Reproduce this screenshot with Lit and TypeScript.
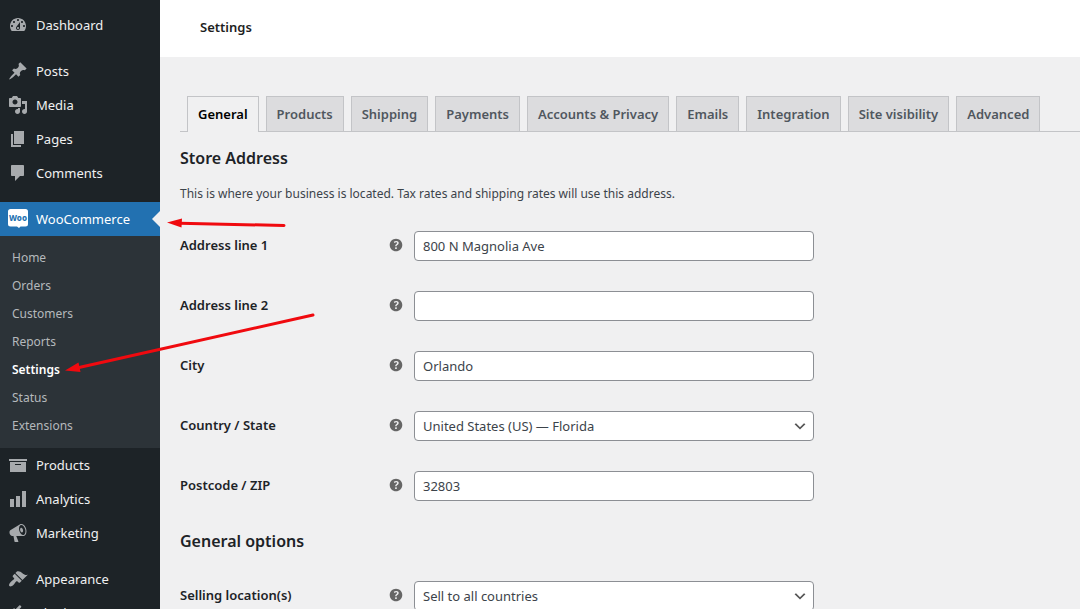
import { LitElement, html, css } from "lit";
import { customElement } from "lit/decorators.js";
import { classMap } from "lit/directives/class-map.js";

const ICONS: Record<string, string> = {
  dashboard:
    "M3.76 16h12.48c1.1-1.37 1.76-3.11 1.76-5 0-4.42-3.58-8-8-8s-8 3.58-8 8c0 1.89.66 3.63 1.76 5zM10 4c.55 0 1 .45 1 1s-.45 1-1 1-1-.45-1-1 .45-1 1-1zM6 6c.55 0 1 .45 1 1s-.45 1-1 1-1-.45-1-1 .45-1 1-1zm8 0c.55 0 1 .45 1 1s-.45 1-1 1-1-.45-1-1 .45-1 1-1zm-5.37 5.55L12 7v6c0 1.1-.9 2-2 2s-2-.9-2-2c0-.57.24-1.08.63-1.45zM4 10c.55 0 1 .45 1 1s-.45 1-1 1-1-.45-1-1 .45-1 1-1zm12 0c.55 0 1 .45 1 1s-.45 1-1 1-1-.45-1-1 .45-1 1-1zm-5 3c0-.55-.45-1-1-1s-1 .45-1 1 .45 1 1 1 1-.45 1-1z",
  pin: "M10.44 3.02l1.82-1.82 6.36 6.35-1.83 1.82c-1.05-.68-2.48-.57-3.41.36l-.75.75c-.92.93-1.04 2.35-.35 3.41l-1.83 1.82-2.41-2.41-2.8 2.79c-.42.42-3.38 2.71-3.8 2.29s1.86-3.39 2.28-3.81l2.79-2.79L4.1 9.36l1.83-1.82c1.05.69 2.48.57 3.4-.36l.75-.75c.93-.92 1.05-2.35.36-3.41z",
  media:
    "M13 11V4c0-.55-.45-1-1-1h-1.67L9 1H5L3.67 3H2c-.55 0-1 .45-1 1v7c0 .55.45 1 1 1h10c.55 0 1-.45 1-1zM7 4.5c1.38 0 2.5 1.12 2.5 2.5S8.38 9.5 7 9.5 4.5 8.38 4.5 7 5.62 4.5 7 4.5zM14 6h5v10.5c0 1.38-1.12 2.5-2.5 2.5S14 17.88 14 16.5s1.12-2.5 2.5-2.5c.17 0 .34.02.5.05V9h-3V6zm-4 8.05V13h2v3.5c0 1.38-1.12 2.5-2.5 2.5S7 17.88 7 16.5 8.12 14 9.5 14c.17 0 .34.02.5.05z",
  page: "M6 15V2h10v13H6zm-1 1h8v2H3V5h2v11z",
  comment: "M4 2h11c.55 0 1 .45 1 1v9c0 .55-.45 1-1 1h-3l-5 5v-5H4c-.55 0-1-.45-1-1V3c0-.55.45-1 1-1z",
  archive: "M19 4v2H1V4h18zM2 7h16v10H2V7zm11 3V9H7v1h6z",
  chart: "M18 18V2h-4v16h4zm-6 0V7H8v11h4zm-6 0v-8H2v8h4z",
  megaphone:
    "M18.15 5.94c.46 1.62.38 3.22-.02 4.48-.42 1.28-1.26 2.18-2.3 2.48-.16.06-.26.06-.4.06-.06.02-.12.02-.18.02-.06.02-.14.02-.22.02h-6.8l2.22 5.5c.02.14-.06.26-.14.34-.08.1-.24.16-.34.16H6.95c-.1 0-.26-.06-.34-.16-.08-.08-.16-.2-.14-.34l-1-5.5H4.25l-.02-.02c-.5.06-1.08-.18-1.54-.62s-.88-1.08-1.06-1.88c-.24-.8-.2-1.56-.02-2.2.18-.62.58-1.08 1.06-1.3l.02-.02 9-5.4c.1-.06.18-.1.24-.16.06-.04.14-.08.24-.12.16-.08.28-.12.5-.18 1.04-.3 2.24.1 3.22.98s1.84 2.24 2.26 3.86zm-2.58 5.98h-.02c.4-.1.74-.34 1.04-.7.58-.7.86-1.76.86-3.04 0-.64-.1-1.3-.28-1.98-.34-1.36-1.02-2.5-1.78-3.24s-1.68-1.1-2.46-.88c-.82.22-1.4.96-1.7 2-.32 1.04-.28 2.36.06 3.72.38 1.36 1 2.5 1.8 3.24.78.74 1.62 1.1 2.48.88zm-2.54-7.08c.22-.04.42-.02.62.04.38.16.76.48 1.02 1s.42 1.2.42 1.78c0 .3-.04.56-.12.8-.18.48-.44.84-.86.94-.34.1-.8-.06-1.14-.4s-.64-.86-.78-1.5c-.18-.62-.12-1.24.02-1.72s.48-.84.82-.94z",
  brush:
    "M14.48 11.06L7.41 3.99l1.5-1.5c.5-.56 2.3-.47 3.51.32 1.21.8 1.43 1.28 2.91 2.1 1.18.64 2.45 1.26 4.45.85zm-.71.71L6.7 4.7 4.93 6.47c-.39.39-.39 1.02 0 1.41l1.06 1.06c.39.39.39 1.03 0 1.42-.6.6-1.43 1.11-2.21 1.69-.35.26-.7.53-1.01.84C1.43 14.23.4 16.08 1.4 17.07c.99 1 2.84-.03 4.18-1.36.31-.31.58-.66.85-1.02.57-.78 1.08-1.61 1.69-2.21.39-.39 1.02-.39 1.41 0l1.06 1.06c.39.39 1.02.39 1.41 0z",
  plug: "M13.11 4.36L9.87 7.6 8 5.73l3.24-3.24c.35-.34 1.05-.2 1.56.32.52.51.66 1.21.31 1.55zm-8 1.77l.91-1.12 9.01 9.01-1.19.84c-.71.71-2.63 1.16-3.82 1.16H6.14L4.9 17.26c-.59.59-1.54.59-2.12 0-.59-.58-.59-1.53 0-2.12l1.24-1.24v-3.88c0-1.13.4-3.19 1.09-3.89zm7.26 3.97l3.24-3.24c.34-.35 1.04-.21 1.55.31.52.51.66 1.21.31 1.55l-3.24 3.25z",
  help: "M17 10c0-3.87-3.14-7-7-7-3.87 0-7 3.13-7 7s3.13 7 7 7c3.86 0 7-3.13 7-7zm-6.3 1.48H9.14v-.43c0-.38.08-.7.24-.98s.46-.57.88-.89c.41-.29.68-.53.81-.71.14-.18.2-.39.2-.62 0-.25-.09-.44-.28-.58-.19-.13-.45-.19-.79-.19-.58 0-1.25.19-2 .57l-.64-1.28c.87-.49 1.8-.74 2.77-.74.81 0 1.45.2 1.92.58.48.39.71.91.71 1.55 0 .43-.09.8-.29 1.11-.19.32-.57.67-1.11 1.06-.38.28-.61.49-.71.63-.1.15-.15.34-.15.57v.35zm-1.47 2.74c-.18-.17-.27-.42-.27-.73 0-.33.08-.58.26-.75s.43-.25.77-.25c.32 0 .57.09.75.26s.27.42.27.74c0 .3-.09.55-.27.72-.18.18-.43.27-.75.27-.33 0-.58-.09-.76-.26z",
};

const icon = (name: string) =>
  html`<svg class="icon" viewBox="0 0 20 20" aria-hidden="true"><path d=${ICONS[name]}></path></svg>`;

const wooIcon = html`<svg class="icon woo" viewBox="0 0 20 20" aria-hidden="true">
  <path d="M2.500 0h15A2.500 2.500 0 0 1 20 2.500v12.500a2.500 2.500 0 0 1-2.500 2.500H12.500L11 19l-2-1.500H2.500A2.500 2.500 0 0 1 0 15V2.500A2.500 2.500 0 0 1 2.500 0z"></path>
  <text class="woo-text" x="10" y="12" text-anchor="middle">Woo</text>
</svg>`;

interface MenuItem {
  label: string;
  icon: string;
  children?: string[];
}

// Each inner list is a group; groups are divided by a blank separator.
const MENU: MenuItem[][] = [
  [{ label: "Dashboard", icon: "dashboard" }],
  [
    { label: "Posts", icon: "pin" },
    { label: "Media", icon: "media" },
    { label: "Pages", icon: "page" },
    { label: "Comments", icon: "comment" },
  ],
  [
    {
      label: "WooCommerce",
      icon: "woo",
      children: ["Home", "Orders", "Customers", "Reports", "Settings", "Status", "Extensions"],
    },
    { label: "Products", icon: "archive" },
    { label: "Analytics", icon: "chart" },
    { label: "Marketing", icon: "megaphone" },
  ],
  [
    { label: "Appearance", icon: "brush" },
    { label: "Plugins", icon: "plug" },
  ],
];

const TABS = [
  "General",
  "Products",
  "Shipping",
  "Payments",
  "Accounts & Privacy",
  "Emails",
  "Integration",
  "Site visibility",
  "Advanced",
];

interface Field {
  id: string;
  label: string;
  value: string;
  select?: boolean;
}

const ADDRESS: Field[] = [
  { id: "address1", label: "Address line 1", value: "800 N Magnolia Ave" },
  { id: "address2", label: "Address line 2", value: "" },
  { id: "city", label: "City", value: "Orlando" },
  { id: "country", label: "Country / State", value: "United States (US) — Florida", select: true },
  { id: "postcode", label: "Postcode / ZIP", value: "32803" },
];

const GENERAL: Field[] = [
  { id: "selling", label: "Selling location(s)", value: "Sell to all countries", select: true },
];

@customElement("admin-menu")
class AdminMenu extends LitElement {
  static styles = css`
    :host {
      display: block;
      background: #1d2327;
      padding-top: 8px;
      font-size: 13px;
      line-height: 18px;
    }
    .list {
      list-style: none;
      margin: 0;
      padding: 0;
    }
    .group {
      margin-bottom: 12px;
    }
    .item {
      display: flex;
      align-items: center;
      gap: 8px;
      height: 34px;
      padding-left: 8px;
      color: #f0f0f1;
      text-decoration: none;
    }
    .item.current {
      position: relative;
      background: #2271b1;
      color: #fff;
    }
    .item.current::after {
      content: "";
      position: absolute;
      right: 0;
      top: 9px;
      border: 8px solid transparent;
      border-left-width: 0;
      border-right-color: #f0f0f1;
    }
    .icon {
      width: 20px;
      height: 20px;
      flex: none;
      fill: #a7aaad;
    }
    .icon.woo {
      fill: #fff;
    }
    .woo-text {
      fill: #2271b1;
      font-size: 8px;
      font-weight: 800;
    }
    .sub {
      list-style: none;
      margin: 0;
      padding: 8px 0;
      background: #2c3338;
    }
    .sub-link {
      display: block;
      padding: 5px 12px;
      font-size: 12px;
      color: #b5b9bc;
      text-decoration: none;
    }
    .sub-link.current {
      color: #fff;
      font-weight: 600;
    }
  `;

  render() {
    return html`<nav aria-label="Main menu">
      ${MENU.map(
        (group) => html`<ul class="list group">
          ${group.map(
            (item) => html`<li>
              <a href="#" class=${classMap({ item: true, current: !!item.children })}>
                ${item.icon === "woo" ? wooIcon : icon(item.icon)}<span>${item.label}</span>
              </a>
              ${item.children
                ? html`<ul class="sub">
                    ${item.children.map(
                      (c) => html`<li>
                        <a href="#" class=${classMap({ "sub-link": true, current: c === "Settings" })}>${c}</a>
                      </li>`
                    )}
                  </ul>`
                : ""}
            </li>`
          )}
        </ul>`
      )}
    </nav>`;
  }
}

@customElement("settings-form")
class SettingsForm extends LitElement {
  static styles = css`
    :host {
      display: block;
      padding: 39px 0 0 20px;
    }
    .tabs {
      display: flex;
      gap: 7px;
      padding-left: 7px;
      border-bottom: 1px solid #c3c4c7;
    }
    .tab {
      padding: 5px 10px;
      border: 1px solid #c3c4c7;
      border-bottom: 0;
      background: #dcdcde;
      color: #50575e;
      font-size: 13px;
      font-weight: 600;
      line-height: 24px;
      white-space: nowrap;
      text-decoration: none;
    }
    .tab.current {
      margin-bottom: -1px;
      padding-bottom: 6px;
      background: #f0f0f1;
      color: #000;
    }
    .heading {
      margin: 0;
      padding: 14px 0;
      font-size: 16px;
      font-weight: 600;
      line-height: 24px;
      color: #1d2327;
    }
    .intro {
      margin: 0;
      padding-top: 1px;
      font-size: 12px;
      line-height: 18px;
    }
    .rows {
      display: flex;
      flex-direction: column;
      gap: 30px;
      padding: 28px 0 14px;
    }
    .heading + .rows {
      padding-top: 14px;
    }
    .row {
      display: grid;
      grid-template-columns: 234px minmax(0, 400px);
      align-items: center;
    }
    .head {
      display: flex;
      align-items: center;
      justify-content: space-between;
      padding: 0 9px 2px 0;
    }
    .label {
      font-size: 13px;
      font-weight: 600;
      line-height: 18px;
      color: #1d2327;
    }
    .icon {
      width: 18px;
      height: 18px;
      fill: #666;
    }
    .control {
      box-sizing: border-box;
      width: 100%;
      height: 30px;
      margin: 0;
      padding: 0 8px;
      border: 1px solid #8c8f94;
      border-radius: 4px;
      background: #fff;
      color: #3c434a;
      font-family: inherit;
      font-size: 13px;
      line-height: 28px;
    }
    .picker {
      display: grid;
      align-items: center;
    }
    .picker > * {
      grid-area: 1 / 1;
    }
    .picker .control {
      appearance: none;
      padding-right: 24px;
    }
    .chevron {
      justify-self: end;
      width: 16px;
      height: 16px;
      margin-right: 6px;
      fill: #555;
      pointer-events: none;
    }
  `;

  private row(f: Field) {
    return html`<div class="row">
      <div class="head"><label class="label" for=${f.id}>${f.label}</label>${icon("help")}</div>
      ${f.select
        ? html`<div class="picker">
            <select class="control" id=${f.id}>
              <option>${f.value}</option>
            </select>
            <svg class="chevron" viewBox="0 0 20 20" aria-hidden="true">
              <path d="M5 6.500l5 5 5-5 1.800 1.200-6.800 6.800-6.800-6.800z"></path>
            </svg>
          </div>`
        : html`<input class="control" type="text" id=${f.id} .value=${f.value} />`}
    </div>`;
  }

  render() {
    return html`<nav class="tabs" aria-label="Settings sections">
        ${TABS.map((t, i) => html`<a href="#" class=${classMap({ tab: true, current: i === 0 })}>${t}</a>`)}
      </nav>
      <form>
        <h2 class="heading">Store Address</h2>
        <p class="intro">
          This is where your business is located. Tax rates and shipping rates will use this address.
        </p>
        <div class="rows">${ADDRESS.map((f) => this.row(f))}</div>
        <h2 class="heading">General options</h2>
        <div class="rows">${GENERAL.map((f) => this.row(f))}</div>
      </form>`;
  }
}

@customElement("app-root")
class AppRoot extends LitElement {
  static styles = css`
    :host {
      display: grid;
      grid-template-columns: 160px minmax(0, 1fr);
      position: relative;
      height: 100vh;
      overflow: hidden;
      background: #f0f0f1;
      color: #3c434a;
      font-family: "Noto Sans", "Open Sans", sans-serif;
      font-size: 13px;
    }
    .title {
      margin: 0;
      padding: 17px 40px 20px;
      background: #fff;
      color: #1e1e1e;
      font-size: 13px;
      font-weight: 600;
      line-height: 20px;
    }
    .arrows {
      position: absolute;
      left: 0;
      top: 0;
      width: 320px;
      height: 400px;
      fill: #f00a0f;
      stroke: #f00a0f;
      stroke-linecap: round;
      pointer-events: none;
    }
  `;

  render() {
    return html`<admin-menu></admin-menu>
      <main>
        <h1 class="title">Settings</h1>
        <settings-form></settings-form>
      </main>
      <svg class="arrows" viewBox="0 0 320 400" aria-hidden="true">
        <path stroke-width="3" d="M180 223.200L284 225.500M79 367.500L313 315"></path>
        <path stroke="none" d="M167 222.500L182 218.500L181.500 227.500zM65 370.500L78.500 362.500L80.500 372z"></path>
      </svg>`;
  }
}
